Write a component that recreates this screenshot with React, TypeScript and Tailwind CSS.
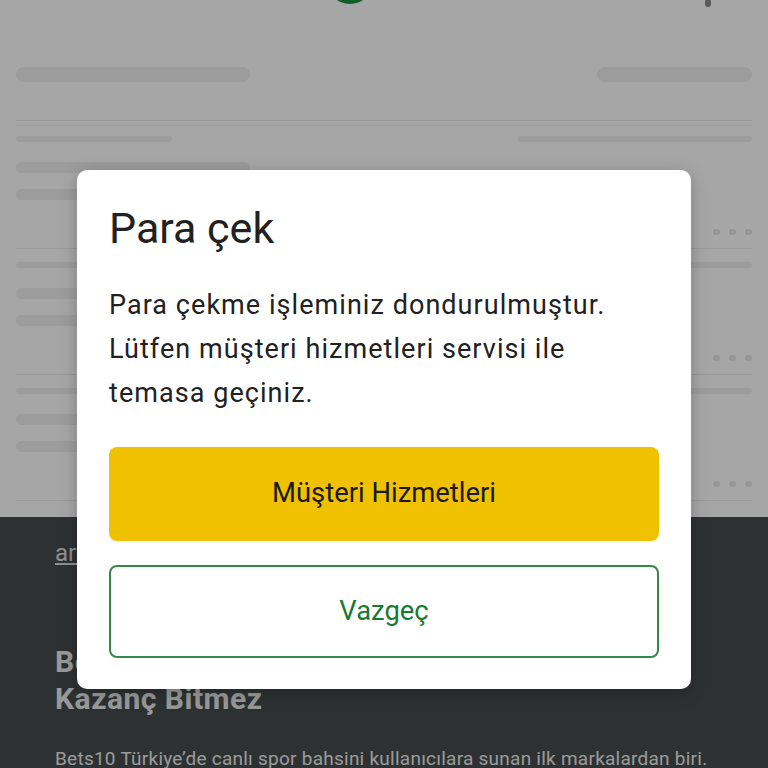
import React from "react";

function Bar({ className }: { className: string }) {
  return <div className={`rounded-full bg-[#f0f0f0] ${className}`} />;
}

function Dots() {
  return (
    <div className="flex justify-end gap-[9px]">
      <span className="h-[6px] w-[7px] rounded-full bg-[#e6e6e6]" />
      <span className="h-[6px] w-[7px] rounded-full bg-[#e6e6e6]" />
      <span className="h-[6px] w-[7px] rounded-full bg-[#e6e6e6]" />
    </div>
  );
}

function TransactionSkeleton({ top }: { top: string }) {
  return (
    <div className={top}>
      <div className="flex justify-between">
        <Bar className="h-[6px] w-[156px]" />
        <Bar className="h-[6px] w-[234px]" />
      </div>
      <Bar className="mt-[20px] h-[11px] w-[234px]" />
      <Bar className="mt-[16px] h-[11px] w-[234px]" />
      <div className="mt-[29px]">
        <Dots />
      </div>
      <div className="mt-[13px] h-px bg-[#ececec]" />
    </div>
  );
}

export default function App() {
  return (
    <div className="relative h-[768px] w-[768px] overflow-hidden bg-white font-[Roboto,sans-serif]">
      <div className="flex h-full flex-col">
        {/* header, scrolled mostly out of view */}
        <header className="-mt-[42px] flex h-[49px] shrink-0 items-end">
          <div className="mb-[3px] ml-[327px] h-[46px] w-[46px] rounded-full bg-[#17923f]" />
          <div className="ml-auto mr-[57px] h-[8px] w-[6px] rounded-sm bg-[#8a8a8a]" />
        </header>

        {/* withdrawal history skeleton */}
        <main className="shrink-0 px-4">
          <div className="mt-[60px] flex justify-between border-b border-[#ececec] pb-[38px]">
            <Bar className="h-[15px] w-[234px]" />
            <Bar className="h-[15px] w-[155px]" />
          </div>
          <div className="mt-[4px] h-px bg-[#f0f0f0]" />
          <TransactionSkeleton top="pt-[10px]" />
          <TransactionSkeleton top="pt-[13px]" />
          <TransactionSkeleton top="pt-[13px]" />
        </main>

        <footer className="mt-[16px] flex-1 bg-[#474c4d] px-[55px] pt-[20px]">
          <a className="block text-[24px] leading-[32px] text-[#d9dcdd] underline">
            arama yap
          </a>
          <h2 className="mt-[74px] text-[30px] font-bold leading-[37px] tracking-[0.5px] text-[#ececec]">
            Bets10 ile Eğlence ve
            <br />
            Kazanç Bitmez
          </h2>
          <p className="mt-[28px] whitespace-nowrap text-[19px] leading-[28px] tracking-[0.25px] text-[#ececec]">
            Bets10 Türkiye’de canlı spor bahsini kullanıcılara sunan ilk markalardan biri.
          </p>
        </footer>
      </div>

      {/* modal backdrop */}
      <div className="absolute inset-0 z-10 bg-black/35" />

      {/* withdrawal dialog */}
      <div className="absolute left-[77px] top-[170px] z-20 w-[614px] rounded-[10px] bg-white px-8 pb-[31px] pt-8 shadow-[0_4px_18px_rgba(0,0,0,0.22)]">
        <h1 className="text-[43px] font-normal leading-[52px] text-[#212121]">Para çek</h1>
        <p className="mt-[29px] text-[27px] leading-[44px] tracking-[1.05px] text-[#212121]">
          Para çekme işleminiz dondurulmuştur.
          <br />
          Lütfen müşteri hizmetleri servisi ile
          <br />
          temasa geçiniz.
        </p>
        <button className="mt-[32px] flex h-[94px] w-full items-center justify-center rounded-[8px] bg-[#efc100] text-[27.4px] text-[#1a1a1a]">
          Müşteri Hizmetleri
        </button>
        <button className="mt-[24px] flex h-[93px] w-full items-center justify-center rounded-[8px] border-2 border-[#35884a] bg-white text-[27.4px] text-[#187a30]">
          Vazgeç
        </button>
      </div>
    </div>
  );
}
